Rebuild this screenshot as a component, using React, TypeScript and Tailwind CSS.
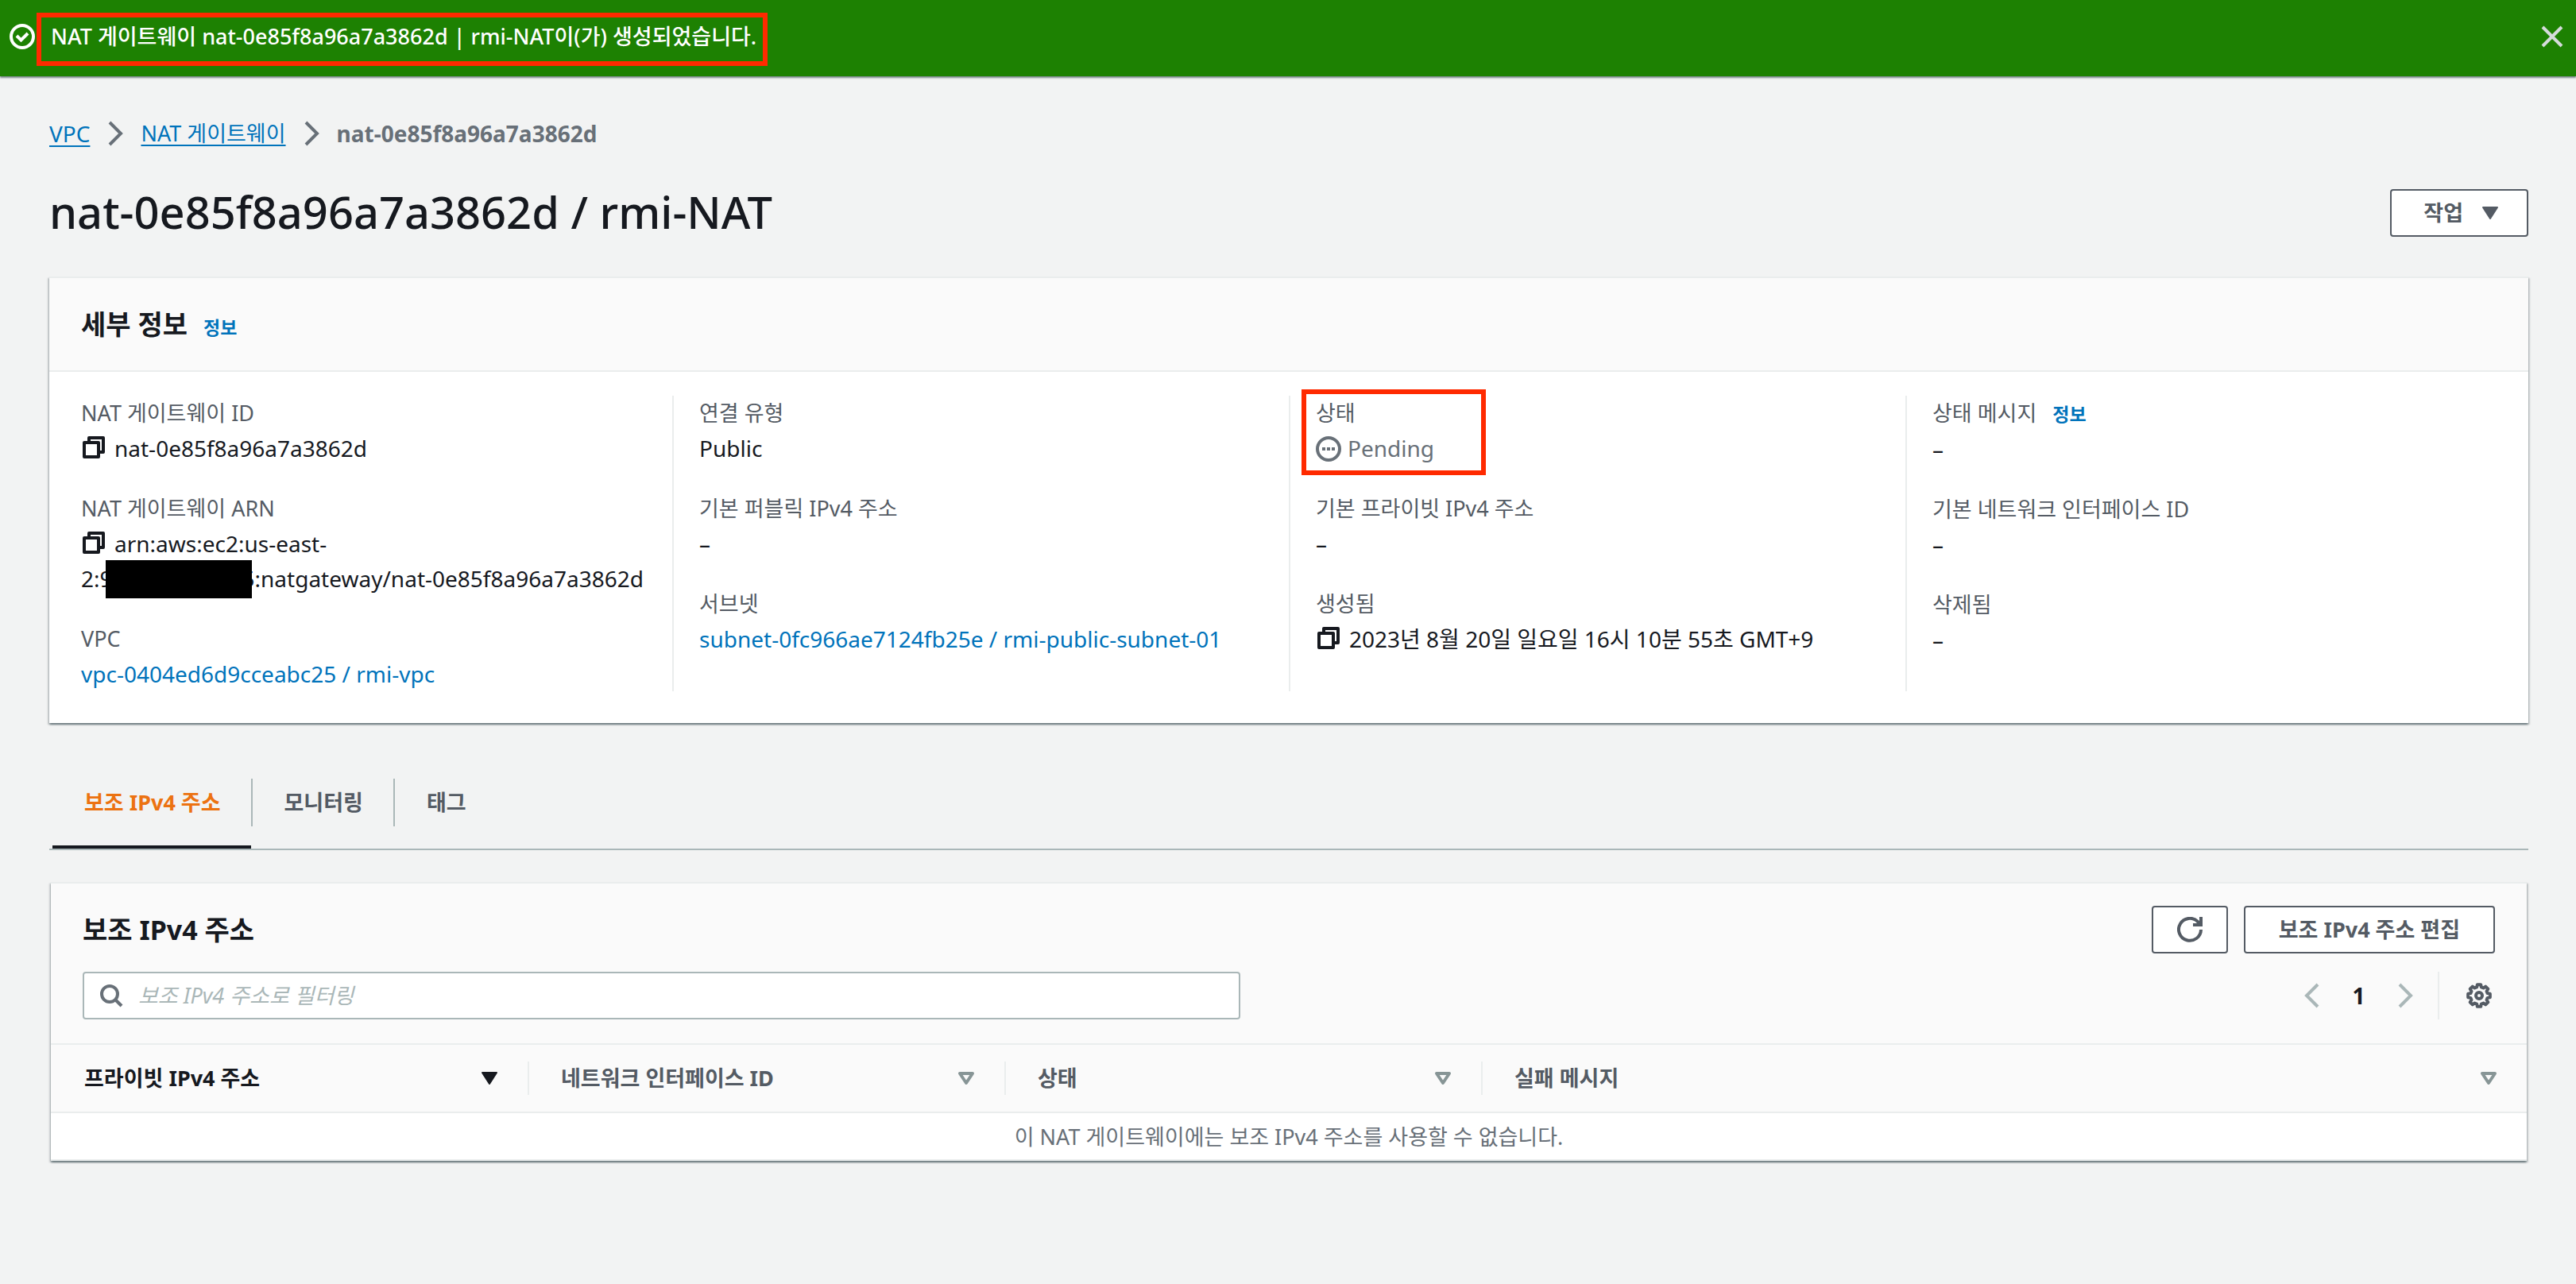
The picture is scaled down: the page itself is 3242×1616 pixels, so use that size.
import React from "react";

const noto = "font-['Noto_Sans','Noto_Sans_CJK_KR',sans-serif]";

function CheckCircle() {
  return (
    <svg viewBox="0 0 32 32" className="size-8 shrink-0" fill="none" stroke="currentColor" strokeWidth="4">
      <circle cx="16" cy="16" r="14" />
      <path d="M9 15l5.5 5.5L23 12" />
    </svg>
  );
}

function CloseIcon() {
  return (
    <svg viewBox="0 0 32 32" className="size-8" fill="none" stroke="currentColor" strokeWidth="4">
      <path d="M4 4l24 24M28 4L4 28" />
    </svg>
  );
}

function Chevron({ left = false }: { left?: boolean }) {
  return (
    <svg viewBox="0 0 32 32" className="size-8 shrink-0" fill="none" stroke="currentColor" strokeWidth="4">
      <path d={left ? "M23 2L9 16l14 14" : "M9 2l14 14L9 30"} />
    </svg>
  );
}

function CopyIcon() {
  return (
    <button type="button" aria-label="복사" className="mr-[10px] inline-block size-8 align-[-4px]">
      <svg viewBox="0 0 32 32" className="size-8" fill="none" stroke="currentColor" strokeWidth="4" strokeLinejoin="round">
        <path d="M4 10h18v18H4z" />
        <path d="M10 10V4h18v18h-6" />
      </svg>
    </button>
  );
}

function PendingIcon() {
  return (
    <svg viewBox="0 0 32 32" className="mr-2 inline-block size-8 align-[-6px]" fill="none" stroke="currentColor" strokeWidth="4">
      <circle cx="16" cy="16" r="14" />
      <path d="M8 16h4M14 16h4M20 16h4" />
    </svg>
  );
}

function RefreshIcon() {
  return (
    <svg viewBox="0 0 32 32" className="size-8" fill="none" stroke="currentColor" strokeWidth="4">
      <path d="M30 16a14 14 0 1 1-4-10l3 4" />
      <path d="M30 0v10H20" />
    </svg>
  );
}

// Eight teeth: each one rises from the inner radius to the outer and back.
const gearPath =
  Array.from({ length: 8 }, (_, tooth) =>
    [
      [11, -15],
      [14, -9],
      [14, 9],
      [11, 15],
    ].map(([radius, offset]) => {
      const angle = ((tooth * 45 + offset) * Math.PI) / 180;
      return `${(16 + radius * Math.sin(angle)).toFixed(2)} ${(16 - radius * Math.cos(angle)).toFixed(2)}`;
    }),
  )
    .flat()
    .map((point, i) => (i === 0 ? "M" : "L") + point)
    .join("") + "z";

function GearIcon() {
  return (
    <svg viewBox="0 0 32 32" className="size-8" fill="none" stroke="currentColor" strokeWidth="4" strokeLinejoin="round">
      <path d={gearPath} />
      <circle cx="16" cy="16" r="4" />
    </svg>
  );
}

function SearchIcon() {
  return (
    <svg viewBox="0 0 32 32" className="size-8 shrink-0 text-[#687078]" fill="none" stroke="currentColor" strokeWidth="4">
      <circle cx="14" cy="14" r="10" />
      <path d="M21 21l8 8" />
    </svg>
  );
}

function Triangle({ filled = false }: { filled?: boolean }) {
  return (
    <svg viewBox="0 0 32 32" className="size-8 shrink-0" fill={filled ? "currentColor" : "none"} stroke="currentColor" strokeWidth={filled ? 2 : 4} strokeLinejoin="round">
      <path d={filled ? "M7 9h18l-9 14z" : "M8 10h16l-8 12z"} />
    </svg>
  );
}

function Field({ label, info = false, children }: { label: string; info?: boolean; children: React.ReactNode }) {
  return (
    <div>
      <dt className="text-[27px] text-[#545b64]">
        {label}
        {info && (
          <a href="#info" className="ml-5 text-[23px] font-bold text-[#0073bb]">
            정보
          </a>
        )}
      </dt>
      <dd>{children}</dd>
    </div>
  );
}

function Column({ children, first = false }: { children: React.ReactNode; first?: boolean }) {
  return (
    <dl className={`flex flex-col gap-8 border-l-2 pr-6 ${first ? "border-transparent pl-[30px]" : "border-[#eaeded] pl-8"}`}>
      {children}
    </dl>
  );
}

const panel = "border-t-2 border-[#eaeded] bg-white shadow-[0_2px_2px_0_rgba(0,28,36,0.4),2px_2px_2px_0_rgba(0,28,36,0.15),-2px_2px_2px_0_rgba(0,28,36,0.15)]";
const button = "flex h-[60px] items-center justify-center rounded-sm border-2 border-[#545b64] bg-white text-[27px] font-bold text-[#545b64]";

const tabs = ["보조 IPv4 주소", "모니터링", "태그"];
const headers = ["프라이빗 IPv4 주소", "네트워크 인터페이스 ID", "상태", "실패 메시지"];

export default function App() {
  return (
    <div className={`min-h-screen bg-[#f2f3f3] text-[28px] leading-[44px] text-[#16191f] ${noto}`}>
      <div role="status" className="flex h-24 items-start justify-between bg-[#1d8102] pl-3 pr-[14px] text-white shadow-[0_2px_2px_0_rgba(0,28,36,0.5)]">
        <div className="flex pt-4">
          <div className="flex h-15 items-center">
            <CheckCircle />
          </div>
          <div className="ml-[2px] h-[67px] border-6 border-[#ff2a00] pl-3 pr-2 text-[27px] font-medium leading-[48px]">
            NAT 게이트웨이 nat-0e85f8a96a7a3862d | rmi-NAT이(가) 생성되었습니다.
          </div>
        </div>
        <button type="button" aria-label="닫기" className="mt-[30px] text-[#d5dbdb]">
          <CloseIcon />
        </button>
      </div>

      <main className="pb-16 pl-[62px] pr-[60px] pt-[50px]">
        <nav aria-label="breadcrumb" className="flex items-center gap-4">
          <a href="#vpc" className="text-[#0073bb] underline decoration-2 underline-offset-4">VPC</a>
          <span className="text-[#687078]"><Chevron /></span>
          <a href="#nat" className="text-[27px] text-[#0073bb] underline decoration-2 underline-offset-4">NAT 게이트웨이</a>
          <span className="text-[#687078]"><Chevron /></span>
          <span className="font-bold text-[#687078]">nat-0e85f8a96a7a3862d</span>
        </nav>

        <div className="mt-[42px] flex items-center justify-between">
          <h1 className="pb-1 text-[56px] font-medium leading-[68px]">nat-0e85f8a96a7a3862d / rmi-NAT</h1>
          <button type="button" className={`${button} gap-[18px] pl-10 pr-[30px]`}>
            작업
            <Triangle filled />
          </button>
        </div>

        <section className={`mt-11 ${panel}`}>
          <div className="flex h-[118px] items-baseline gap-5 border-b-2 border-[#eaeded] bg-[#fafafa] px-10 pt-9">
            <h2 className="text-[34px] font-bold">세부 정보</h2>
            <a href="#info" className="text-[23px] font-bold text-[#0073bb]">정보</a>
          </div>
          <div className="grid grid-cols-4 px-2 pb-10 pt-[30px]">
            <Column first>
              <Field label="NAT 게이트웨이 ID">
                <CopyIcon />nat-0e85f8a96a7a3862d
              </Field>
              <Field label="NAT 게이트웨이 ARN">
                <CopyIcon />arn:aws:ec2:us-east-
                <br />
                2:9
                <span className="relative inline-block w-[163px]">
                  &nbsp;
                  <span className="absolute -left-[9px] -right-3 -top-[1px] z-10 h-12 bg-black" />
                </span>
                5:natgateway/nat-0e85f8a96a7a3862d
              </Field>
              <Field label="VPC">
                <a href="#vpc" className="text-[#0073bb]">vpc-0404ed6d9cceabc25 / rmi-vpc</a>
              </Field>
            </Column>
            <Column>
              <Field label="연결 유형">Public</Field>
              <Field label="기본 퍼블릭 IPv4 주소">–</Field>
              <Field label="서브넷">
                <a href="#subnet" className="text-[#0073bb]">subnet-0fc966ae7124fb25e / rmi-public-subnet-01</a>
              </Field>
            </Column>
            <Column>
              <div className="relative">
                <Field label="상태">
                  <span className="text-[#687078]"><PendingIcon />Pending</span>
                </Field>
                <div className="absolute -left-[18px] -top-2 h-[108px] w-[232px] border-6 border-[#ff2a00]" />
              </div>
              <Field label="기본 프라이빗 IPv4 주소">–</Field>
              <Field label="생성됨">
                <CopyIcon />2023년 8월 20일 일요일 16시 10분 55초 GMT+9
              </Field>
            </Column>
            <Column>
              <Field label="상태 메시지" info>–</Field>
              <Field label="기본 네트워크 인터페이스 ID">–</Field>
              <Field label="삭제됨">–</Field>
            </Column>
          </div>
        </section>

        <div role="tablist" className="mt-[70px] flex border-b-2 border-[#aab7b8] pl-1 text-[27px] font-bold text-[#545b64]">
          {tabs.map((tab, i) => (
            <React.Fragment key={tab}>
              {i > 0 && <span className="h-15 w-[2px] bg-[#aab7b8]" />}
              <button
                type="button"
                role="tab"
                aria-selected={i === 0}
                className={`flex h-22 items-start border-b-4 pl-10 pr-[38px] pt-2 ${i === 0 ? "border-[#16191f] text-[#ec7211]" : "border-transparent"}`}
              >
                {tab}
              </button>
            </React.Fragment>
          ))}
        </div>

        <section className={`mx-[2px] mt-10 ${panel} border-b-2`}>
          <div className="border-b-2 border-[#eaeded] bg-[#fafafa] px-10 pb-[30px] pt-7">
            <div className="flex items-center justify-between">
              <h2 className="text-[34px] font-bold">보조 IPv4 주소</h2>
              <div className="flex gap-5">
                <button type="button" aria-label="새로 고침" className={`${button} w-24`}>
                  <RefreshIcon />
                </button>
                <button type="button" className={`${button} px-[42px]`}>보조 IPv4 주소 편집</button>
              </div>
            </div>
            <div className="mt-[23px] flex items-center justify-between">
              <label className="flex h-[60px] w-[48%] items-center gap-[18px] rounded-sm border-2 border-[#aab7b8] bg-white pl-[18px]">
                <SearchIcon />
                <input
                  type="text"
                  aria-label="보조 IPv4 주소로 필터링"
                  placeholder="보조 IPv4 주소로 필터링"
                  className="w-full bg-transparent text-[27px] italic outline-none placeholder:text-[#aab7b8]"
                />
              </label>
              <div className="flex items-center">
                <button type="button" aria-label="이전" className="text-[#aab7b8]"><Chevron left /></button>
                <button type="button" className="w-[85px] text-center font-bold">1</button>
                <button type="button" aria-label="다음" className="text-[#aab7b8]"><Chevron /></button>
                <span className="ml-[25px] h-[60px] w-[2px] bg-[#eaeded]" />
                <button type="button" aria-label="설정" className="ml-[34px] mr-1 text-[#545b64]"><GearIcon /></button>
              </div>
            </div>
          </div>
          <table className="w-full table-fixed border-separate border-spacing-0">
            <colgroup>
              <col className="w-[602px]" />
              <col className="w-[600px]" />
              <col className="w-[600px]" />
              <col />
            </colgroup>
            <thead>
              <tr className="bg-[#fafafa] text-left text-[27px]">
                {headers.map((h, i) => (
                  <th key={h} scope="col" className="h-[86px] border-b-2 border-[#eaeded] p-0">
                    <div className={`flex h-[42px] items-center justify-between pr-8 ${i === 0 ? "pl-[42px]" : "pl-10 text-[#545b64]"} ${i < 3 ? "border-r-2 border-[#eaeded]" : ""}`}>
                      {h}
                      <span className={i === 0 ? "" : "text-[#879596]"}><Triangle filled={i === 0} /></span>
                    </div>
                  </th>
                ))}
              </tr>
            </thead>
            <tbody>
              <tr className="h-[58px]">
                <td colSpan={4} className="p-0 pt-[2px] text-center text-[27px] text-[#687078]">
                  이 NAT 게이트웨이에는 보조 IPv4 주소를 사용할 수 없습니다.
                </td>
              </tr>
            </tbody>
          </table>
        </section>
      </main>
    </div>
  );
}
